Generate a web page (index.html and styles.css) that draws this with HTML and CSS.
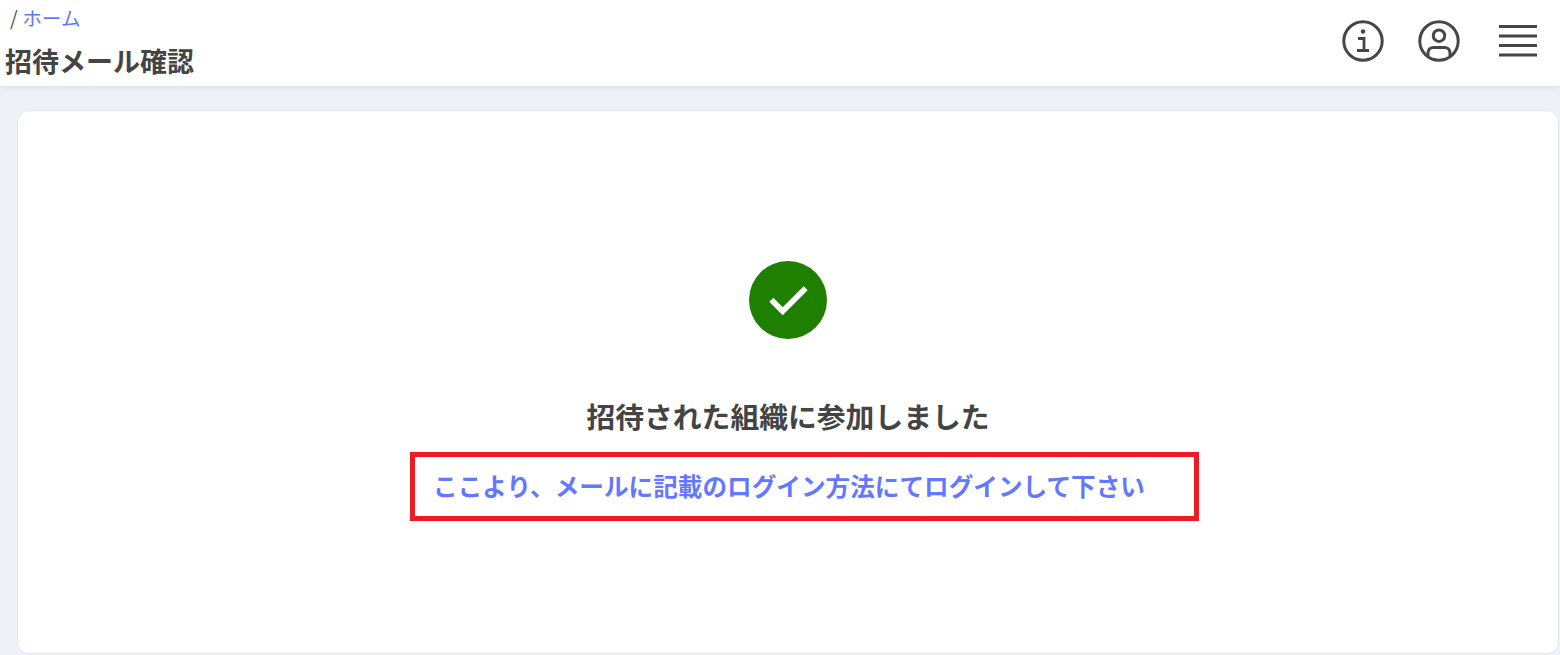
FILE: index.html
```html
<!DOCTYPE html>
<html lang="ja">
<head>
    <meta charset="UTF-8">
    <meta name="viewport" content="width=device-width, initial-scale=1.0">
    <title>招待メール確認</title>
    <link rel="stylesheet" href="styles.css">
</head>
<body>
    <header class="header">
        <div class="header-title">
            <div class="breadcrumb"><span class="breadcrumb-sep">/</span> <a href="#">ホーム</a></div>
            <h1>招待メール確認</h1>
        </div>
        <div class="header-icons">
            <svg class="icon" width="42" height="42" viewBox="0 0 42 42" fill="none" stroke="#464646" stroke-width="3" aria-label="情報">
                <circle cx="21" cy="21" r="19.2"/>
                <circle cx="21" cy="11.5" r="2.2" fill="#464646" stroke="none"/>
                <path d="M16 18.5h6v12M15 30.5h12" stroke-width="2.8"/>
            </svg>
            <svg class="icon" width="42" height="42" viewBox="0 0 42 42" fill="none" stroke="#464646" stroke-width="3" aria-label="アカウント">
                <circle cx="21" cy="21" r="19.2"/>
                <circle cx="21" cy="15.7" r="5.7"/>
                <path d="M10 36v-3c0-3.5 2.500-5.500 5.500-5.500h11c3 0 5.500 2 5.500 5.500v3"/>
            </svg>
            <svg class="icon icon-menu" width="38" height="33" viewBox="0 0 38 33" fill="none" stroke="#464646" stroke-width="3.2" aria-label="メニュー">
                <path d="M0 1.500h38M0 11h38M0 20.500h38M0 30h38"/>
            </svg>
        </div>
    </header>

    <main class="main">
        <section class="card">
            <div class="check">
                <svg width="40" height="32" viewBox="0 0 40 32" fill="none" stroke="#fff" stroke-width="5.7">
                    <path d="M3.300 15.700L14.700 27.300 37.700 4.300"/>
                </svg>
            </div>
            <h2>招待された組織に参加しました</h2>
            <div class="link-row">
                <a href="#">ここより、メールに記載のログイン方法にてログインして下さい</a>
                <div class="red-frame"></div>
            </div>
        </section>
    </main>
</body>
</html>
```

FILE: styles.css
```css
* {
    margin: 0;
    padding: 0;
    box-sizing: border-box;
}

html, body {
    height: 100%;
    overflow: hidden;
}

body {
    background: #eef1f8;
    color: #444;
    font-family: "Noto Sans CJK JP", "Noto Sans", sans-serif;
    display: flex;
    flex-direction: column;
}

a {
    color: #6478ff;
    text-decoration: none;
}

.header {
    height: 86px;
    flex-shrink: 0;
    background: #fff;
    box-shadow: 0 2px 6px rgba(0, 0, 0, 0.08);
    display: flex;
    justify-content: space-between;
    padding: 0 23px 0 5px;
}

.header-title {
    display: flex;
    flex-direction: column;
}

.breadcrumb {
    font-size: 19.700px;
    line-height: 28px;
    padding: 4px 0 0 5px;
}

.breadcrumb-sep {
    color: #555;
}

h1 {
    font-size: 27px;
    line-height: 40px;
    font-weight: 700;
    margin-top: 9px;
}

.header-icons {
    display: flex;
    align-items: center;
    gap: 34px;
    padding-bottom: 5px;
}

.icon-menu {
    margin: 2px 0 0 5px;
}

.main {
    flex: 1;
    padding: 24px 1px 1px 17px;
    display: flex;
}

.card {
    flex: 1;
    background: #fff;
    border: 1px solid #e4e5e8;
    border-radius: 12px;
    display: flex;
    flex-direction: column;
    align-items: center;
    padding-top: 150px;
}

.check {
    width: 78px;
    height: 78px;
    border-radius: 50%;
    background: #1f7f00;
    display: flex;
    align-items: center;
    justify-content: center;
}

h2 {
    font-size: 28.800px;
    line-height: 40px;
    font-weight: 700;
    margin-top: 57px;
}

.link-row {
    position: relative;
    margin-top: 29px;
    padding-left: 2px;
    font-size: 24.640px;
    line-height: 40px;
    font-weight: 700;
}

.red-frame {
    position: absolute;
    left: -21px;
    right: -54px;
    top: -13px;
    bottom: -16px;
    border: 5px solid #ed1c24;
}
```
